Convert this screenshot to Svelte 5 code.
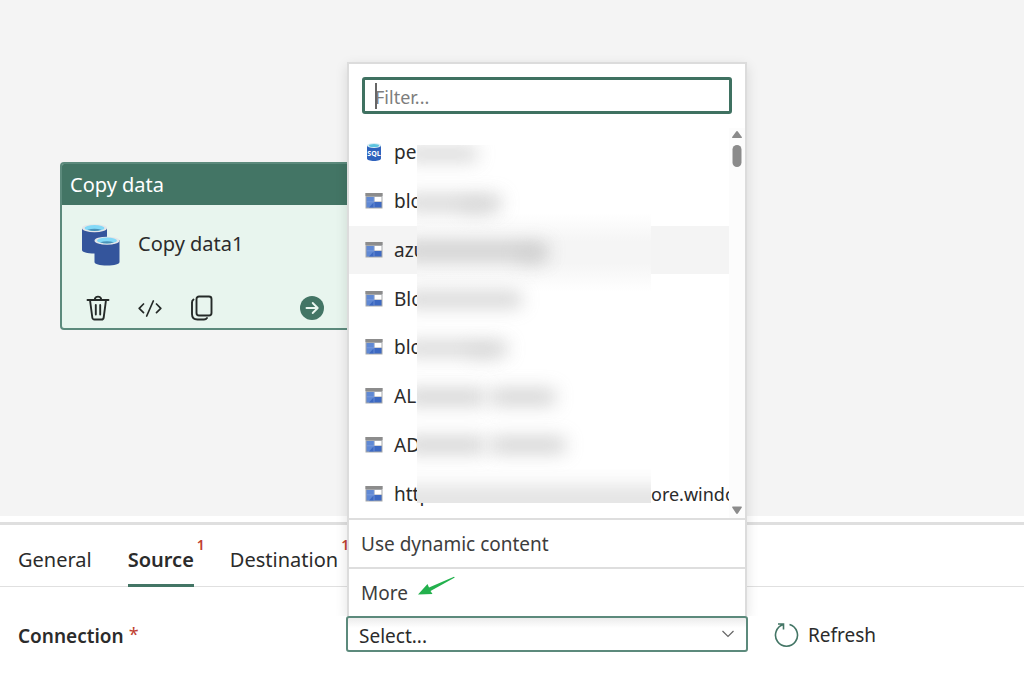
<script>
  let filter = $state('');

  const connections = [
    { icon: 'sql', name: 'pe' },
    { icon: 'blob', name: 'blo' },
    { icon: 'blob', name: 'azu', active: true },
    { icon: 'blob', name: 'Blo' },
    { icon: 'blob', name: 'blo' },
    { icon: 'blob', name: 'AL' },
    { icon: 'blob', name: 'AD' },
    { icon: 'blob', name: 'https://', tail: 'ore.windo' }
  ];

  // Smudges that hide the rest of each connection name.
  const smudges = [
    { x: -12, y: 2, w: 72, h: 14, o: 0.75 },
    { x: -12, y: 50, w: 96, h: 16, o: 0.75 },
    { x: 44, y: 54, w: 30, h: 16, o: 0.3 },
    { x: -12, y: 98, w: 142, h: 16, o: 0.9 },
    { x: 100, y: 102, w: 28, h: 18, o: 0.4 },
    { x: -12, y: 147, w: 116, h: 15, o: 0.8 },
    { x: -12, y: 196, w: 102, h: 15, o: 0.75 },
    { x: 50, y: 200, w: 30, h: 14, o: 0.3 },
    { x: -12, y: 244, w: 80, h: 16, o: 0.8 },
    { x: 74, y: 244, w: 64, h: 16, o: 0.8 },
    { x: -12, y: 292, w: 80, h: 16, o: 0.8 },
    { x: 74, y: 292, w: 74, h: 16, o: 0.8 },
    { x: -20, y: 340, w: 280, h: 30, o: 0.48 }
  ];
</script>

<main class="page">
  <section class="canvas" aria-label="Pipeline">
    <article class="node">
      <header class="node-head">Copy data</header>
      <div class="node-main">
        <svg width="38" height="42" viewBox="0 0 38 42" aria-hidden="true">
          <path d="M0 4v22c0 2 5 3.500 12.500 3.500S25 28 25 26V4z" fill="#34559c" />
          <ellipse cx="12.500" cy="4.200" rx="12.500" ry="4" fill="#e3e6e8" />
          <ellipse cx="12.500" cy="4" rx="10" ry="3" fill="#83d9f7" />
          <path d="M5.500 5.800q7-2.200 14 0-7 2.500-14 0" fill="#4a92b8" />
          <path d="M12.500 16v22c0 2 5 3.500 12.500 3.500S37.500 40 37.500 38V16z" fill="#34559c" />
          <ellipse cx="25" cy="16.700" rx="12.500" ry="4" fill="#e3e6e8" />
          <ellipse cx="25" cy="16.500" rx="10" ry="3" fill="#83d9f7" />
          <path d="M18 18.300q7-2.200 14 0-7 2.500-14 0" fill="#4a92b8" />
        </svg>
        <span>Copy data1</span>
      </div>
      <div class="node-tools">
        <button aria-label="Delete">
          <svg width="24" height="26" viewBox="0 0 24 26" fill="none" stroke="#252a28" stroke-width="1.900" stroke-linecap="round" stroke-linejoin="round">
            <path d="M1.500 5h21M4 5l2.300 17.500q.3 2 2.200 2h7q1.900 0 2.200-2L20 5M8.800 4.800a3.200 3.200 0 0 1 6.400 0M9.800 10v9.500M14.200 10v9.500" />
          </svg>
        </button>
        <button aria-label="View code">
          <svg width="24" height="26" viewBox="0 0 24 26" fill="none" stroke="#252a28" stroke-width="1.700" stroke-linecap="round" stroke-linejoin="round">
            <path d="M5.500 9 1.200 13.300l4.300 4.300M18.500 9l4.300 4.300-4.300 4.300M15.300 6l-6.600 15" />
          </svg>
        </button>
        <button aria-label="Copy">
          <svg width="24" height="26" viewBox="0 0 24 26" fill="none" stroke="#252a28" stroke-width="1.900" stroke-linecap="round" stroke-linejoin="round">
            <rect x="6.500" y="1.500" width="15" height="19" rx="2.500" />
            <path d="M3.500 4.500Q2 5.500 2 7.500V19q0 5.500 5.500 5.500H14q2 0 3-1.500" />
          </svg>
        </button>
        <button class="go" aria-label="Run">
          <svg width="24" height="24" viewBox="0 0 24 24" fill="none" stroke="#e9f5ef" stroke-width="1.900" stroke-linecap="round" stroke-linejoin="round">
            <circle cx="12" cy="12" r="12" fill="#437565" stroke="none" />
            <path d="M6.500 12h11M12.700 7l5 5-5 5" />
          </svg>
        </button>
      </div>
    </article>
  </section>

  <section class="panel">
    <nav class="tabs">
      <a href="#general">General</a>
      <a href="#source" class="current">Source<sup>1</sup></a>
      <a href="#destination">Destination<sup>1</sup></a>
    </nav>

    <div class="field">
      <label class="field-label" for="connection">Connection <span class="star">*</span></label>
      <div class="combo">
        <select id="connection">
          <option>Select...</option>
        </select>
        <svg class="chevron" width="14" height="8" viewBox="0 0 14 8" fill="none" stroke="#666" stroke-width="1.200">
          <path d="m1.500 1 5.500 5.500L12.500 1" />
        </svg>

        <div class="popup">
          <div class="filter">
            <input type="text" placeholder="Filter..." aria-label="Filter" bind:value={filter} />
            <span class="caret"></span>
          </div>
          <div class="list">
            <ul>
              {#each connections as item}
                <li class:active={item.active}>
                  {#if item.icon === 'sql'}
                    <svg width="18" height="20" viewBox="0 0 18 20" aria-hidden="true">
                      <path d="M2 3.500v13c0 1.500 3 2.500 7 2.500s7-1 7-2.500v-13z" fill="#2f62bd" />
                      <ellipse cx="9" cy="3.500" rx="7" ry="2.500" fill="#d7edf4" />
                      <ellipse cx="9" cy="3.400" rx="5" ry="1.500" fill="#5cc4df" />
                      <text x="9" y="13.500" text-anchor="middle" font-size="7" font-weight="700" fill="#fff">SQL</text>
                    </svg>
                  {:else}
                    <svg width="18" height="20" viewBox="0 0 18 20" aria-hidden="true">
                      <path d="M.5 2h17v15.500H.5z" fill="#a6a8ab" />
                      <path d="M.5 2h17v3H.5z" fill="#8c8c8c" />
                      <path d="M1.500 6h7.500v10.500H1.500z" fill="#6089d4" />
                      <path d="M9.500 6H16.500v4.500H9.500z" fill="#fff" />
                      <path d="M9 11h7.500v5.500H4z" fill="#3d69c2" />
                      <path d="M1.500 10.800h7.500M9 6v10.500" stroke="#86a4df" stroke-width=".6" />
                    </svg>
                  {/if}
                  <span class="name">{item.name}</span>
                  {#if item.tail}<span class="tail">{item.tail}</span>{/if}
                </li>
              {/each}
            </ul>
            <svg class="smudge" width="234" height="358" viewBox="0 0 234 358" aria-hidden="true">
              <defs>
                <linearGradient id="veil" x1="0" y1="0" x2="0" y2="1">
                  <stop offset="0" stop-color="#fff" />
                  <stop offset=".19" stop-color="#fff" />
                  <stop offset=".27" stop-color="#f5f5f5" />
                  <stop offset=".33" stop-color="#f5f5f5" />
                  <stop offset=".41" stop-color="#fff" />
                  <stop offset="1" stop-color="#fff" />
                </linearGradient>
                <filter id="soft" x="-60%" y="-250%" width="220%" height="600%">
                  <feGaussianBlur stdDeviation="9" />
                </filter>
              </defs>
              <rect width="234" height="358" fill="url(#veil)" />
              {#each smudges as s}
                <rect x={s.x} y={s.y} width={s.w} height={s.h} fill="#c6c6c6" opacity={s.o} filter="url(#soft)" />
              {/each}
            </svg>
            <div class="scroll" aria-hidden="true">
              <svg width="10" height="36" viewBox="0 0 10 36" fill="#8b8b8b">
                <path d="M5 0q.6 0 1 .7l3.800 5.300q.4 1-.6 1H.8q-1 0-.6-1L4 .7Q4.400 0 5 0" />
                <rect x=".5" y="14" width="9" height="22" rx="4.500" />
              </svg>
              <svg width="10" height="8" viewBox="0 0 10 8" fill="#8b8b8b">
                <path d="M5 8q.6 0 1-.7L9.800 1.500q.4-1-.6-1H.8q-1 0-.6 1L4 7.300Q4.400 8 5 8" />
              </svg>
            </div>
          </div>
          <button class="extra">Use dynamic content</button>
          <button class="extra">
            More
            <svg width="38" height="20" viewBox="0 0 38 20" aria-hidden="true">
              <path d="M0 18.500 9.500 8l1.500 3.500L36 .8l.8.8L12.500 15l2 3z" fill="#23b14d" />
            </svg>
          </button>
        </div>
      </div>
      <button class="refresh">
        <svg width="26" height="26" viewBox="0 0 26 26" fill="none" stroke="#437565" stroke-width="1.600">
          <path d="M15.500 2.600A11 11 0 1 1 9.500 2.600M4 2h5.500v5.500" />
        </svg>
        Refresh
      </button>
    </div>
  </section>
</main>

<style>
  :global(body) {
    margin: 0;
    background: #fff;
  }
  .page {
    display: flex;
    flex-direction: column;
    min-height: 100vh;
    overflow: hidden;
    color: #2b2b2b;
    font: 20px/28px "Noto Sans", "Open Sans", sans-serif;
  }
  button,
  input,
  select {
    margin: 0;
    padding: 0;
    border: 0;
    background: none;
    color: inherit;
    font: inherit;
  }
  svg {
    display: block;
    flex: none;
  }
  .canvas {
    position: relative;
    flex: 1;
    background: #f4f4f4;
  }
  .node {
    position: absolute;
    left: 60px;
    top: 162px;
    width: 320px;
    box-sizing: border-box;
    border: 2px solid #5c8a7c;
    border-radius: 4px;
    background: #e8f5ee;
    overflow: hidden;
  }
  .node-head {
    padding: 6px 8px;
    background: #437565;
    color: #fff;
    line-height: 29px;
  }
  .node-main {
    display: flex;
    align-items: center;
    gap: 18px;
    padding: 19px 20px 0;
  }
  .node-main span {
    padding-bottom: 2px;
  }
  .node-tools {
    display: flex;
    align-items: center;
    gap: 28px;
    padding: 29px 54px 7px 24px;
  }
  .go {
    margin-left: auto;
  }
  .panel {
    margin-top: 6px;
    border-top: 3px solid #dfdfdf;
    background: #fff;
  }
  .tabs {
    display: flex;
    gap: 36px;
    padding: 0 18px;
    border-bottom: 1px solid #e0e0e0;
  }
  .tabs a {
    position: relative;
    padding: 21px 0 12px;
    color: inherit;
    text-decoration: none;
  }
  .tabs .current {
    font-weight: 600;
  }
  .tabs .current::after {
    content: "";
    position: absolute;
    left: 0;
    right: 0;
    bottom: -1px;
    height: 3px;
    background: #437565;
  }
  .tabs sup {
    position: absolute;
    left: 100%;
    top: 10px;
    padding-left: 3px;
    color: #c0402f;
    font-size: 14px;
    font-weight: 600;
    line-height: 20px;
  }
  .field {
    display: flex;
    align-items: center;
    padding: 29px 18px 40px;
  }
  .field-label {
    width: 328px;
    padding-top: 4px;
    font-size: 19px;
    font-weight: 600;
  }
  .star {
    color: #c0402f;
    font-size: 18px;
    font-weight: 400;
    vertical-align: 2px;
    line-height: 20px;
  }
  .combo {
    position: relative;
    width: 402px;
  }
  .combo select {
    display: block;
    width: 100%;
    height: 36px;
    padding: 3px 11px 0;
    border: 2px solid #5c8a7c;
    border-radius: 3px;
    background: linear-gradient(#ececec, #fff 10px);
    appearance: none;
    font-size: 19px;
  }
  .chevron {
    position: absolute;
    right: 13px;
    top: 14px;
  }
  .popup {
    position: absolute;
    left: 1px;
    right: 1px;
    bottom: 100%;
    border: 2px solid #dcdcdc;
    border-bottom: 0;
    background: #fff;
    box-shadow: 0 4px 12px rgba(0, 0, 0, 0.12);
    clip-path: inset(-16px -16px 0 -16px);
    font-size: 19px;
  }
  .filter {
    position: relative;
    padding: 13px 13px 14px;
  }
  .filter input {
    display: block;
    width: 100%;
    height: 37px;
    box-sizing: border-box;
    padding: 3px 10px 0;
    border: 3px solid #3f7161;
    border-radius: 3px;
    font-size: 18px;
    outline: none;
  }
  .filter input::placeholder {
    color: #7d7d7d;
    opacity: 1;
  }
  .caret {
    position: absolute;
    left: 26px;
    top: 19px;
    width: 2px;
    height: 26px;
    background: #666;
  }
  .list {
    position: relative;
    display: flex;
    height: 390px;
  }
  ul {
    display: grid;
    grid-auto-rows: 1fr;
    flex: 1;
    min-width: 0;
    margin: 0;
    padding: 0;
    overflow: hidden;
    list-style: none;
  }
  li {
    display: flex;
    align-items: center;
    padding-left: 16px;
    white-space: nowrap;
  }
  li svg {
    margin-right: 11px;
  }
  li.active {
    background: #f4f4f4;
  }
  .name {
    flex: none;
    width: 257px;
  }
  .tail {
    font-size: 18px;
  }
  .smudge {
    position: absolute;
    left: 68px;
    top: 17px;
  }
  .scroll {
    display: flex;
    flex-direction: column;
    align-items: center;
    justify-content: space-between;
    width: 16px;
    padding: 3px 0 4px;
    box-sizing: border-box;
    background: #fcfcfc;
  }
  .extra {
    display: flex;
    align-items: center;
    gap: 10px;
    width: 100%;
    height: 49px;
    padding: 0 12px;
    border-top: 2px solid #dedede;
    text-align: left;
    color: #3d3d3d;
  }
  .extra svg {
    margin-bottom: 14px;
  }
  .refresh {
    display: flex;
    align-items: center;
    gap: 8px;
    margin-left: 26px;
    padding-top: 2px;
    font-size: 19px;
  }
</style>
